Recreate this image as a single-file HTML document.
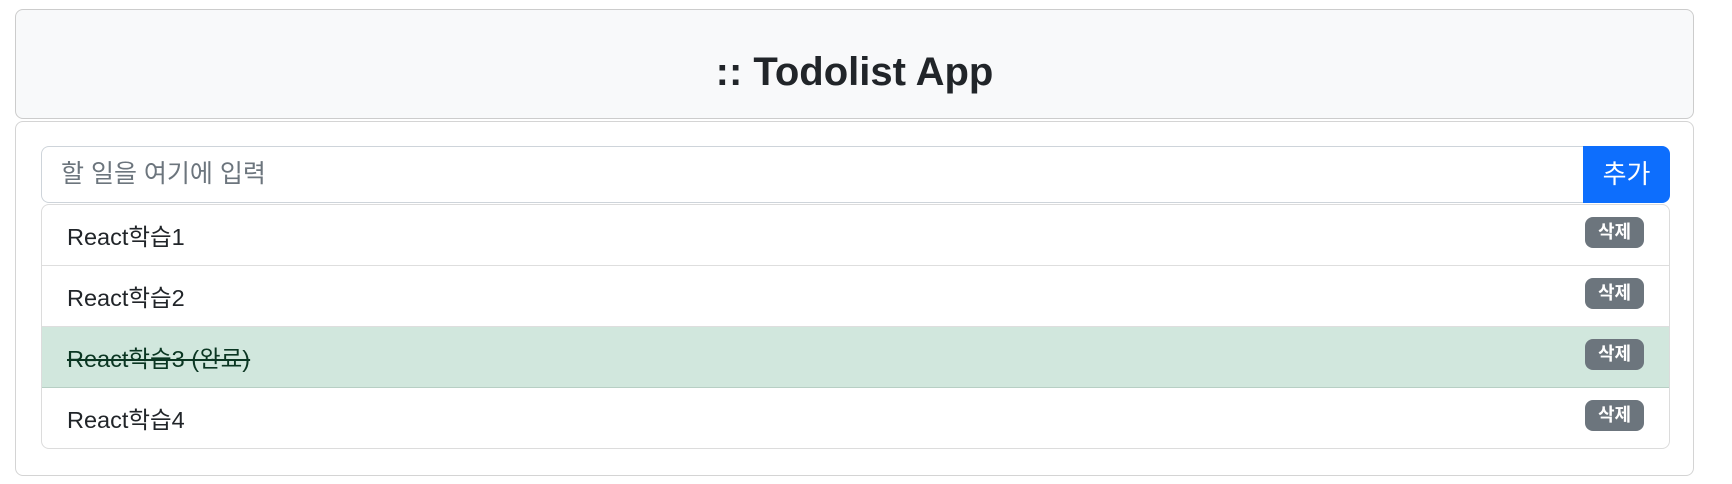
<!DOCTYPE html>
<html><head><meta charset="utf-8"><style>
*{box-sizing:border-box;margin:0;padding:0}
body{width:1732px;height:484px;background:#fff;font-family:"Liberation Sans","Noto Sans CJK KR",sans-serif;color:#212529;position:relative}
.hdr{position:absolute;left:15px;top:9px;width:1679px;height:110px;background:#f8f9fa;border:1px solid #ccc;border-radius:8px;text-align:center;font-size:40px;font-weight:bold;line-height:124px}
.body{position:absolute;left:15px;top:121px;width:1679px;height:355px;border:1px solid #d4d4d4;border-radius:8px}
.inp{position:absolute;left:41px;top:146px;width:1543px;height:57px;border:1px solid #ced4da;border-right:none;border-radius:8px 0 0 8px;font-size:25px;color:#6c757d;padding-left:19px;line-height:55px}
.btn{position:absolute;left:1583px;top:146px;width:87px;height:57px;background:#0d6efd;color:#fff;border-radius:0 8px 8px 0;font-size:26px;text-align:center;line-height:57px}
.list{position:absolute;left:41px;top:204px;width:1629px;height:245px;border:1px solid #dcdcdc;border-radius:8px;overflow:hidden}
.row{height:61px;border-bottom:1px solid #dedede;position:relative;font-size:23.5px;padding-left:25px;line-height:64px}
.row:last-child{border-bottom:none}
.done{background:#d1e7dd;color:#0a3622;text-decoration:line-through;border-bottom-color:#b7cfc4}
.badge{position:absolute;left:1543px;top:12px;width:59px;height:31px;background:#6c757d;color:#fff;border-radius:8px;font-size:18px;font-weight:bold;text-align:center;line-height:31px;text-decoration:none}
</style></head><body>
<div class="hdr">:: Todolist App</div>
<div class="body"></div>
<div class="inp">할 일을 여기에 입력</div>
<div class="btn">추가</div>
<div class="list">
<div class="row">React학습1<span class="badge">삭제</span></div>
<div class="row">React학습2<span class="badge">삭제</span></div>
<div class="row done">React학습3 (완료)<span class="badge">삭제</span></div>
<div class="row">React학습4<span class="badge">삭제</span></div>
</div>
</body></html>
